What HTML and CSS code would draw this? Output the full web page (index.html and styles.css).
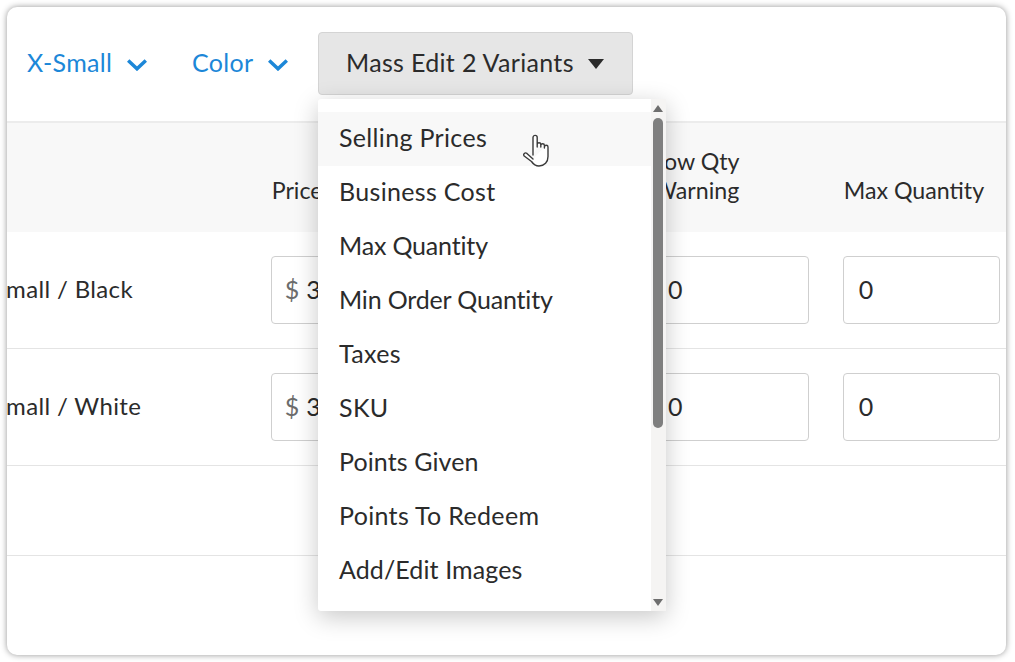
FILE: index.html
```html
<!DOCTYPE html>
<html lang="en">
<head>
<meta charset="utf-8">
<title>Variants</title>
<link rel="stylesheet" href="styles.css">
</head>
<body>
<main class="card">
  <div class="toolbar">
    <a class="filter filter-size">X-Small
      <svg class="chevron" viewBox="0 0 20 12"><path d="M1.200 1.500l8.800 8.300 8.800-8.300"/></svg>
    </a>
    <a class="filter filter-color">Color
      <svg class="chevron" viewBox="0 0 20 12"><path d="M1.200 1.500l8.800 8.300 8.800-8.300"/></svg>
    </a>
    <button class="mass-edit">Mass Edit 2 Variants<span class="caret"></span></button>
  </div>
  <div class="table">
    <div class="row head">
      <div></div>
      <div>Price</div>
      <div>Cost</div>
      <div>Low Qty<br>Warning</div>
      <div>Max Quantity</div>
    </div>
    <div class="row body">
      <div class="name">Small / Black</div>
      <div class="field money"><span class="unit">$</span> 30.00</div>
      <div class="field money"><span class="unit">$</span> 0.00</div>
      <div class="field">0</div>
      <div class="field">0</div>
    </div>
    <div class="row body">
      <div class="name">Small / White</div>
      <div class="field money"><span class="unit">$</span> 30.00</div>
      <div class="field money"><span class="unit">$</span> 0.00</div>
      <div class="field">0</div>
      <div class="field">0</div>
    </div>
    <div class="spacer"></div>
  </div>
  <div class="menu">
    <ul class="items">
      <li class="hover">Selling Prices</li>
      <li>Business Cost</li>
      <li class="tight">Max Quantity</li>
      <li class="tight">Min Order Quantity</li>
      <li>Taxes</li>
      <li>SKU</li>
      <li class="snug">Points Given</li>
      <li>Points To Redeem</li>
      <li class="snug">Add/Edit Images</li>
    </ul>
    <div class="scrollbar">
      <span class="arrow-up"></span>
      <span class="thumb"></span>
      <span class="arrow-down"></span>
    </div>
  </div>
  <svg class="hand" viewBox="0 0 26 33">
    <path d="M10 21V3.500c0-2.800 4.200-2.800 4.200 0V13m0-2.500c0-2.300 3.600-2.300 3.600 0V13m0-1.500c0-2.300 3.600-2.300 3.600 0V14m0-1c0-2.300 3.600-2.300 3.600 0v9.500c0 5.500-3.500 9.500-9 9.500-3.500 0-5.500-1.500-7.500-4.500L1.200 22c-1.400-2 .8-4 2.700-2.600L10 25"/>
  </svg>
</main>
</body>
</html>
```
FILE: styles.css
```css
* { box-sizing: border-box; }
html, body { margin: 0; height: 100%; background: #fff; overflow: hidden; }
body { padding: 7px 9px 7px 7px; font-family: "Lato", "Liberation Sans", sans-serif; font-size: 25px; letter-spacing: .33px; color: #2b2b2b; }
.card { position: relative; height: 648px; background: #fff; border-radius: 10px; box-shadow: 0 0 6px rgba(0,0,0,.42); }
.toolbar { display: flex; align-items: flex-start; height: 116px; padding: 25px 0 0 20px; border-bottom: 2px solid #ececec; }
.filter { display: flex; align-items: center; height: 63px; padding-bottom: 4px; color: #1c87d8; }
.filter-size { width: 165px; }
.filter-color { width: 126px; }
.chevron { width: 20px; height: 12px; margin-left: 14.500px; margin-top: 6px; fill: none; stroke: #1c87d8; stroke-width: 3.500; }
.mass-edit {
  display: flex; align-items: center; width: 315px; height: 63px; padding: 0 0 4px 27px;
  background: #e6e6e6; border: 1px solid #d4d4d4; border-radius: 4px;
  font: inherit; letter-spacing: inherit; color: #2b2b2b;
}
.caret { width: 0; height: 0; margin-left: 14px; margin-top: 4px; border: 8.500px solid transparent; border-top: 10px solid #2b2b2b; border-bottom: 0; }
.table { overflow: hidden; }
.row { display: grid; grid-template-columns: 250px repeat(4, 157px); column-gap: 33.700px; margin-left: -20px; }
.head { height: 109px; background: #f8f8f8; align-items: end; padding-bottom: 27px; margin-left: 0; grid-template-columns: 230px repeat(4, 157px); font-size: 23.200px; letter-spacing: 0; line-height: 29px; }
.head > div { padding-left: 1px; }
.body { height: 117px; align-items: center; border-bottom: 1px solid #e4e4e4; }
.name { padding: 0 0 4px 6px; font-size: 24px; letter-spacing: .35px; }
.field { height: 68px; margin-top: -1px; padding: 0 0 2px 15px; display: flex; align-items: center; white-space: pre; border: 1px solid #cfcfcf; border-radius: 4px; background: #fff; }
.money { padding-left: 13px; }
.unit { color: #6c6c6c; }
.spacer { height: 90px; border-bottom: 1px solid #e4e4e4; }
.menu {
  position: absolute; left: 311px; top: 92px; width: 348px; height: 512px; display: flex;
  background: #fff; border-radius: 3px; box-shadow: 0 6px 24px rgba(0,0,0,.22);
}
.items { flex: 1; margin: 0; padding: 13px 0 0; list-style: none; }
.items li { height: 54px; padding-left: 21px; line-height: 51px; }
.items .hover { background: #f8f8f8; }
.items .tight { letter-spacing: -.17px; }
.items .snug { letter-spacing: .1px; }
.scrollbar { position: relative; width: 15px; background: #f5f4f3; }
.thumb { position: absolute; top: 19px; left: 2px; width: 10px; height: 310px; border-radius: 5px; background: #7f7f7f; }
.arrow-up, .arrow-down { position: absolute; width: 0; height: 0; border: 5px solid transparent; left: 2px; }
.arrow-up { top: 6px; border-bottom: 7px solid #6e6e6e; border-top: 0; }
.arrow-down { bottom: 5px; border-top: 7px solid #6e6e6e; border-bottom: 0; }
.hand { position: absolute; left: 516px; top: 127px; width: 26px; height: 33px; fill: #fff; stroke: #3a3a3a; stroke-width: 1.400; stroke-linejoin: round; stroke-linecap: round; }
```
